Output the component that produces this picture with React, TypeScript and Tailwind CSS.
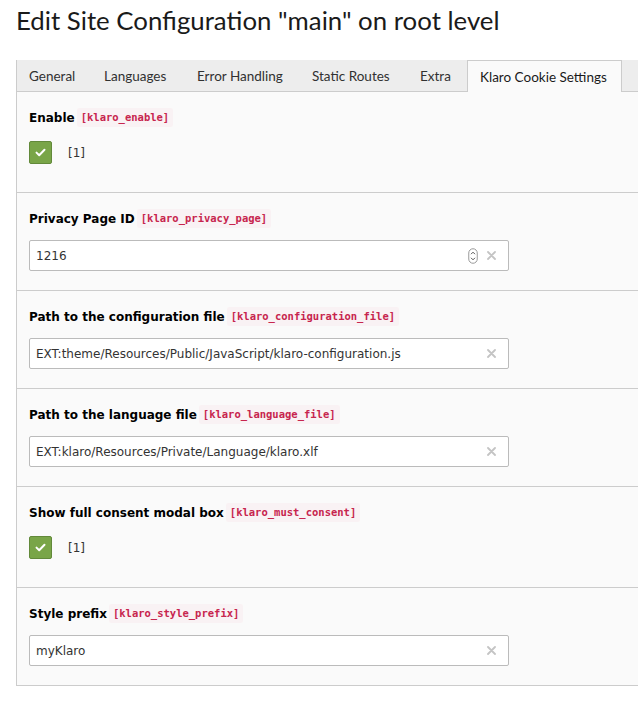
import React from "react";

const tabs = [
  { label: "General", w: "w-[71px]" },
  { label: "Languages", w: "w-[89px]" },
  { label: "Error Handling", w: "w-[111px]" },
  { label: "Static Routes", w: "w-[104px]" },
  { label: "Extra", w: "w-[55px]" },
];

function Label({ text, code }: { text: string; code: string }) {
  return (
    <div className="flex h-[18px] items-center pt-px">
      <span className="font-['DejaVu_Sans',sans-serif] text-[12px] font-bold text-black">{text}</span>
      <span className="ml-[2px] flex h-[19px] items-center rounded-[2px] bg-[#f9f2f4] px-[4px] font-['DejaVu_Sans_Mono',monospace] text-[10.5px] font-bold text-[#c7254e]">
        {code}
      </span>
    </div>
  );
}

function ClearX() {
  return (
    <svg width="9" height="9" viewBox="0 0 9 9" className="shrink-0">
      <path d="M1 1 L8 8 M8 1 L1 8" stroke="#c4c4c4" strokeWidth="1.8" strokeLinecap="round" />
    </svg>
  );
}

function Spinner() {
  return (
    <svg width="10" height="16" viewBox="0 0 10 16" className="shrink-0">
      <rect x="0.75" y="0.75" width="8.5" height="14.5" rx="4.25" fill="white" stroke="#9a9a9a" strokeWidth="1" />
      <path d="M3 6.2 L5 4.2 L7 6.2" stroke="#555" strokeWidth="1" fill="none" />
      <path d="M3 9.8 L5 11.8 L7 9.8" stroke="#555" strokeWidth="1" fill="none" />
    </svg>
  );
}

function InputSection({ text, code, value, number }: { text: string; code: string; value: string; number?: boolean }) {
  return (
    <div className="px-3 pt-4 pb-[19px]">
      <Label text={text} code={code} />
      <div className="mt-[13px] flex h-[31px] w-[480px] items-center rounded-[2px] border border-[#bbbbbb] bg-white pl-[6px] pr-[12px]">
        <span className="flex-1 pt-px font-['DejaVu_Sans',sans-serif] text-[12px] text-[#333]">{value}</span>
        {number && <span className="mr-[9px] flex items-center"><Spinner /></span>}
        <ClearX />
      </div>
    </div>
  );
}

function CheckSection({ text, code }: { text: string; code: string }) {
  return (
    <div className="px-3 pt-4 pb-[28px]">
      <Label text={text} code={code} />
      <div className="mt-[15px] flex h-[23px] items-center">
        <div className="flex h-[23px] w-[23px] items-center justify-center rounded-[2px] border border-[#62893a] bg-[#79a548]">
          <svg width="11" height="9" viewBox="0 0 11 9">
            <path d="M1.5 4.6 L4.2 7.2 L9.5 1.8" stroke="white" strokeWidth="2" fill="none" strokeLinecap="round" strokeLinejoin="round" />
          </svg>
        </div>
        <span className="ml-4 pt-px font-['DejaVu_Sans',sans-serif] text-[12px] text-[#333]">[1]</span>
      </div>
    </div>
  );
}

export default function App() {
  return (
    <div className="h-[708px] w-[638px] overflow-hidden bg-white pl-4">
      <h1 className="pt-[5px] font-['Lato',sans-serif] text-[25.8px] leading-[31px] font-normal whitespace-nowrap text-[#1a1a1a]">
        Edit Site Configuration "main" on root level
      </h1>
      <div className="mt-[24px] border-b border-l border-[#cccccc] bg-[#fafafa]">
        <div className="flex h-[32px] items-end border-b border-[#cccccc] bg-[#ededed]">
          {tabs.map((t) => (
            <div
              key={t.label}
              className={`${t.w} mr-1 flex h-[31px] shrink-0 items-center px-3 pt-px font-['Lato',sans-serif] text-[13.5px] whitespace-nowrap text-[#313131]`}
            >
              {t.label}
            </div>
          ))}
          <div className="-mb-px flex h-[32px] w-[155px] shrink-0 items-center border border-b-0 border-[#cccccc] bg-[#fafafa] px-3 pt-px font-['Lato',sans-serif] text-[13.5px] whitespace-nowrap text-[#1a1a1a]">
            Klaro Cookie Settings
          </div>
        </div>
        <div className="divide-y divide-[#cccccc]">
          <CheckSection text="Enable" code="[klaro_enable]" />
          <InputSection text="Privacy Page ID" code="[klaro_privacy_page]" value="1216" number />
          <InputSection
            text="Path to the configuration file"
            code="[klaro_configuration_file]"
            value="EXT:theme/Resources/Public/JavaScript/klaro-configuration.js"
          />
          <InputSection
            text="Path to the language file"
            code="[klaro_language_file]"
            value="EXT:klaro/Resources/Private/Language/klaro.xlf"
          />
          <CheckSection text="Show full consent modal box" code="[klaro_must_consent]" />
          <InputSection text="Style prefix" code="[klaro_style_prefix]" value="myKlaro" />
        </div>
      </div>
    </div>
  );
}
